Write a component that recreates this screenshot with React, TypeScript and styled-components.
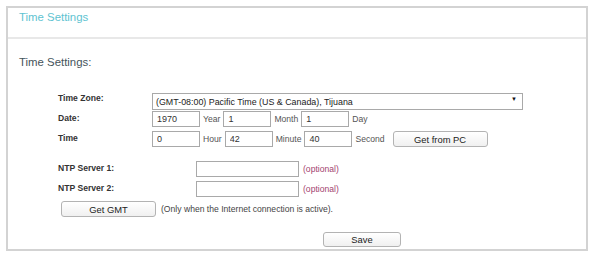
import React from "react";
import styled, { createGlobalStyle } from "styled-components";

const Global = createGlobalStyle`
  html, body { margin: 0; padding: 0; background: #ffffff; }
  body { font-family: "Liberation Sans", Arial, sans-serif; }
  * { box-sizing: border-box; }
`;

const Page = styled.div`
  padding: 6px 10px 0 6px;
  width: 598px;
`;

const Panel = styled.section`
  width: 582px;
  border: 2px solid #d3d3d3;
  background: #fff;
`;

const Header = styled.div`
  height: 31px;
  border-bottom: 2px solid #e8e8e8;
  padding-left: 11px;
`;

const Title = styled.h1`
  margin: 0;
  font-size: 11.4px;
  line-height: 18px;
  font-weight: normal;
  color: #5ec3d1;
`;

const Heading = styled.h2`
  margin: 14px 0 0 11px;
  font-size: 11.4px;
  line-height: 18px;
  font-weight: normal;
  color: #45545b;
`;

const Form = styled.div`
  margin-top: 18px;
  padding-left: 50px;
  display: flex;
  flex-direction: column;
`;

const Group = styled.div<{ $gap?: number }>`
  display: flex;
  flex-direction: column;
  margin-top: ${(p) => p.$gap ?? 0}px;
`;

const Row = styled.div`
  display: flex;
  align-items: center;
  height: 20px;
`;

const Label = styled.label<{ $w: number }>`
  width: ${(p) => p.$w}px;
  flex: none;
  font-size: 8.6px;
  font-weight: bold;
  color: #333;
  padding-bottom: 3px;
`;

const SelectWrap = styled.div`
  position: relative;
  width: 371px;
  height: 17px;
`;

const Select = styled.select`
  appearance: none;
  -webkit-appearance: none;
  width: 100%;
  height: 17px;
  margin: 0;
  border: 1px solid #a9a9a9;
  border-radius: 0;
  background: #fff;
  font-family: "Liberation Sans", Arial, sans-serif;
  font-size: 8.9px;
  color: #222;
  padding: 0 0 0 3px;
`;

const Arrow = styled.span`
  position: absolute;
  right: 6px;
  top: 4px;
  font-size: 6px;
  line-height: 8px;
  color: #111;
  pointer-events: none;
`;

const Input = styled.input<{ $w: number }>`
  width: ${(p) => p.$w}px;
  height: 16px;
  margin: 0;
  border: 1px solid #a9a9a9;
  border-radius: 0;
  padding: 0 0 0 4px;
  font-family: "Liberation Sans", Arial, sans-serif;
  font-size: 9px;
  color: #333;
  background: #fff;
  outline: none;
`;

const Unit = styled.span`
  margin: 0 3px;
  font-size: 8.6px;
  color: #555;
`;

const Optional = styled.span`
  margin-left: 4px;
  font-size: 8.6px;
  color: #a3446f;
`;

const Note = styled.span`
  margin-left: 5px;
  font-size: 8.6px;
  color: #444;
`;

const Button = styled.button<{ $w: number; $h?: number; $ml?: number }>`
  width: ${(p) => p.$w}px;
  height: ${(p) => p.$h ?? 16}px;
  margin: 0 0 0 ${(p) => p.$ml ?? 0}px;
  padding: 0;
  border: 1px solid #b3b3b3;
  border-radius: 3px;
  background: linear-gradient(#ffffff, #f0f0f0);
  font-family: "Liberation Sans", Arial, sans-serif;
  font-size: 9.4px;
  color: #222;
  cursor: pointer;
`;

export default function App() {
  return (
    <>
      <Global />
      <Page>
        <Panel>
          <Header>
            <Title>Time Settings</Title>
          </Header>
          <Heading>Time Settings:</Heading>
          <Form>
            <Group>
              <Row>
                <Label $w={94}>Time Zone:</Label>
                <SelectWrap>
                  <Select defaultValue="tj">
                    <option value="tj">(GMT-08:00) Pacific Time (US &amp; Canada), Tijuana</option>
                  </Select>
                  <Arrow>▼</Arrow>
                </SelectWrap>
              </Row>
              <Row>
                <Label $w={94}>Date:</Label>
                <Input $w={48} defaultValue="1970" />
                <Unit>Year</Unit>
                <Input $w={48} defaultValue="1" />
                <Unit>Month</Unit>
                <Input $w={48} defaultValue="1" />
                <Unit>Day</Unit>
              </Row>
              <Row>
                <Label $w={94}>Time</Label>
                <Input $w={48} defaultValue="0" />
                <Unit>Hour</Unit>
                <Input $w={48} defaultValue="42" />
                <Unit>Minute</Unit>
                <Input $w={48} defaultValue="40" />
                <Unit>Second</Unit>
                <Button $w={95} $ml={5}>Get from PC</Button>
              </Row>
            </Group>
            <Group $gap={10}>
              <Row>
                <Label $w={138}>NTP Server 1:</Label>
                <Input $w={103} />
                <Optional>(optional)</Optional>
              </Row>
              <Row>
                <Label $w={138}>NTP Server 2:</Label>
                <Input $w={103} />
                <Optional>(optional)</Optional>
              </Row>
              <Row>
                <Button $w={95} $ml={3}>Get GMT</Button>
                <Note>(Only when the Internet connection is active).</Note>
              </Row>
            </Group>
            <Group $gap={10}>
              <Row>
                <Button $w={78} $h={15} $ml={265}>Save</Button>
              </Row>
            </Group>
          </Form>
        </Panel>
      </Page>
    </>
  );
}
